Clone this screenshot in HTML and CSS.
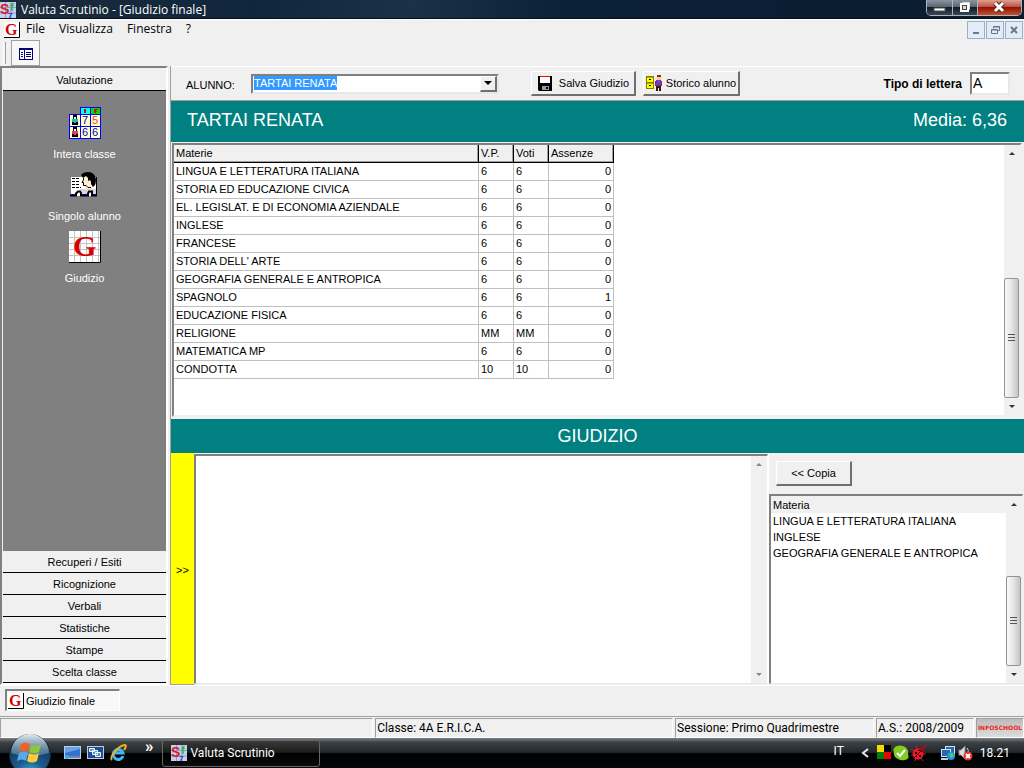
FILE: index.html
```html
<!DOCTYPE html>
<html lang="it">
<head>
<meta charset="utf-8">
<title>Valuta Scrutinio - [Giudizio finale]</title>
<link rel="stylesheet" href="styles.css">
</head>
<body>
<svg class="defs" aria-hidden="true">
  <defs>
    <symbol id="app-icon" viewBox="0 0 16 16">
      <rect width="16" height="16" fill="#c4cfea"/>
      <path d="M0 5.500H16M0 11H16M5.500 0V16M11 0V16" stroke="#8c9ac8" stroke-width="1"/>
      <text x="0" y="12" font-family="Liberation Sans" font-size="14" font-weight="bold" fill="#d8202c">S</text>
      <text x="10" y="9" font-family="Liberation Sans" font-size="11" font-weight="bold" fill="#10c030">f</text>
      <text x="8" y="16" font-family="Liberation Sans" font-size="8" font-weight="bold" fill="#2030e0">7</text>
    </symbol>
    <symbol id="g-icon" viewBox="0 0 16 16">
      <rect width="16" height="16" fill="#fff"/>
      <path d="M0 15.500H15.500V0" fill="none" stroke="#000"/>
      <text x="1" y="13" font-family="Liberation Serif" font-size="16" font-weight="bold" fill="#d80000">G</text>
    </symbol>
    <symbol id="flag" viewBox="0 0 26 24">
      <path d="M4 3Q8 0 13 3L11 11Q7 8 2 11Z" fill="#f0602c"/>
      <path d="M14 4Q19 6 24 3L22 11Q17 14 12 11Z" fill="#8cc63c"/>
      <path d="M2 12Q7 9 11 12L9 20Q5 17 0 20Z" fill="#5aa8e8"/>
      <path d="M12 12Q17 15 22 12L20 20Q15 23 10 20Z" fill="#fccc3c"/>
    </symbol>
  </defs>
</svg>

<header class="titlebar">
  <svg class="ico16"><use href="#app-icon"/></svg>
  <h1 class="titlebar-text">Valuta Scrutinio - [Giudizio finale]</h1>
  <div class="winbtns">
    <button class="winbtn" aria-label="Riduci a icona"><svg width="25" height="15"><rect x="7" y="8" width="11" height="3" fill="#fff" stroke="#555"/></svg></button>
    <button class="winbtn" aria-label="Ripristina"><svg width="24" height="15"><path d="M9.500 4V2.500H16.500V9.500H15" fill="none" stroke="#ddd"/><rect x="8" y="4" width="7" height="7" fill="#444" stroke="#fff" stroke-width="2"/><rect x="10" y="6" width="3" height="3" fill="#ddd"/></svg></button>
    <button class="winbtn winbtn-close" aria-label="Chiudi"><svg width="43" height="15"><path d="M17 3L25 11M25 3L17 11" stroke="#5a2020" stroke-width="5"/><path d="M17 3L25 11M25 3L17 11" stroke="#fff" stroke-width="3"/></svg></button>
  </div>
</header>

<nav class="menubar">
  <svg class="ico16"><use href="#g-icon"/></svg>
  <button class="menu">File</button>
  <button class="menu">Visualizza</button>
  <button class="menu">Finestra</button>
  <button class="menu">?</button>
  <div class="mdibtns">
    <button class="mdibtn" aria-label="Riduci"><svg width="16" height="16"><path d="M5 11H11" stroke="#66788c" stroke-width="2"/></svg></button>
    <button class="mdibtn" aria-label="Ripristina"><svg width="16" height="16"><path d="M6.500 6.500V4.500H12.500V8.500H11M6 5H13M4.500 7.500H10.500V11.500H4.500ZM4 8H11" fill="none" stroke="#66788c"/></svg></button>
    <button class="mdibtn" aria-label="Chiudi"><svg width="16" height="16"><path d="M5 5L11 11M11 5L5 11" stroke="#66788c" stroke-width="2"/></svg></button>
  </div>
</nav>

<div class="toolbar">
  <span class="grip"></span>
  <button class="toolbtn" aria-label="Mostra barra"><svg width="14" height="12"><rect x=".5" y=".5" width="13" height="11" fill="#fff" stroke="#000080"/><path d="M0 1H14" stroke="#000080" stroke-width="2"/><path d="M5.500 2V12" stroke="#000080"/><path d="M2 4.500H4M2 6.500H4M2 8.500H4M7 4.500H12M7 6.500H12M7 8.500H12" stroke="#000080"/></svg></button>
</div>

<main class="main">
  <aside class="sidebar">
    <button class="band band-open">Valutazione</button>
    <div class="shortcuts">
      <button class="shortcut">
        <svg width="32" height="32">
          <path d="M0 7H11V0H32V32H0Z" fill="#0000ff"/>
          <rect x="12" y="1" width="9" height="6" fill="#00ffff"/><rect x="22" y="1" width="9" height="6" fill="#00e000"/>
          <path d="M16 2V6M26 2V6" stroke="#e00000" stroke-width="2"/><path d="M26 2.500H29M26 4.500H28" stroke="#e00000"/>
          <path d="M1 8H11V19H1ZM12 8H21V19H12ZM22 8H31V19H22ZM1 20H11V31H1ZM12 20H21V31H12ZM22 20H31V31H22Z" fill="#ffffc8"/>
          <path d="M4 8H8V12H4ZM3 15H9V18H3ZM4 20H8V24H4ZM3 27H9V30H3Z" fill="#000"/>
          <path d="M5 10H7V12H5ZM5 22H7V24H5Z" fill="#fff"/>
          <path d="M3 12H9V15H7V16H5V15H3Z" fill="#20b8c0"/><path d="M3 24H9V27H7V28H5V27H3Z" fill="#e83870"/>
          <g font-family="Liberation Sans" font-size="11" fill="#0000c8"><text x="13" y="17">7</text><text x="23" y="17" fill="#f04050">5</text><text x="13" y="29">6</text><text x="23" y="29">6</text></g>
        </svg>
        <span>Intera classe</span>
      </button>
      <button class="shortcut">
        <svg width="32" height="32">
          <path d="M3 8H28V27H3Z" fill="#fff"/><path d="M28.500 8V27" stroke="#000"/>
          <path d="M4 9.500H11M4 12.500H12M4 15.500H11M4 18.500H13" stroke="#000" stroke-dasharray="3 1"/>
          <path d="M15 5Q19 3 24 5L27 9L26 14L24 18V20H17V17L14 16V13L15 11Z" fill="#fff1cf"/>
          <path d="M13 6Q15 3 20 3Q25 3 27 7Q29 11 27 16L25 18L23 15V13L22 11L20 12V9L18 7L15 9Z" fill="#000"/>
          <path d="M15.500 9V11L14 13.500H15.500V16.500H18L20 18.500H23" stroke="#000" fill="none"/>
          <path d="M12 20H28V26H24V23H21V26H14V23H12Z" fill="#d8d8d8"/>
          <path d="M2 26.500H8V24.500L10 22.500H12L13 24V26.500H20V24.500L21 22.500H24V26.500H29" fill="none" stroke="#000" stroke-width="2"/>
          <path d="M3 25.500H7M14 25.500H19M25 25.500H28" stroke="#0000c0"/>
        </svg>
        <span>Singolo alunno</span>
      </button>
      <button class="shortcut">
        <svg width="32" height="32">
          <rect width="32" height="32" fill="#fff"/>
          <path d="M5.500 0V31M11.500 0V31M17.500 0V31M23.500 0V31M29.500 0V31M0 6.500H31M0 12.500H31M0 18.500H31M0 24.500H31" stroke="#c4c4c4"/>
          <path d="M0 31.500H31.500V0" fill="none" stroke="#000"/>
          <text x="4" y="25" font-family="Liberation Serif" font-size="30" font-weight="bold" fill="#d80000">G</text>
        </svg>
        <span>Giudizio</span>
      </button>
    </div>
    <button class="band">Recuperi / Esiti</button>
    <button class="band">Ricognizione</button>
    <button class="band">Verbali</button>
    <button class="band">Statistiche</button>
    <button class="band">Stampe</button>
    <button class="band">Scelta classe</button>
  </aside>

  <section class="content">
    <form class="formbar">
      <label class="alunno" for="alunno">ALUNNO:</label>
      <div class="combo">
        <input id="alunno" class="combo-input" size="12" value="TARTAI RENATA">
        <button class="combo-arrow" type="button" aria-label="Apri elenco"><svg width="8" height="4"><path d="M0 0H8L4 4Z"/></svg></button>
      </div>
      <button class="btn btn-save" type="button">
        <svg width="16" height="16"><path d="M1 1H15V16H2L1 15Z" fill="#000"/><path d="M3 1H13V8H3Z" fill="#fff"/><path d="M3 1.500H13" stroke="#f00"/><path d="M5 11H12V15H5Z" fill="#999"/><path d="M9 12H11V14H9Z" fill="#000"/></svg>
        Salva Giudizio</button>
      <button class="btn btn-history" type="button">
        <svg width="17" height="16"><path d="M0 1H8V14H0Z" fill="#808000"/><path d="M1 2H7V7H1ZM1 8H7V13H1Z" fill="#ff0"/><path d="M3 4.500H5M3 10.500H5" stroke="#000"/><path d="M1 2.500H7M1 8.500H7" stroke="#b0b000"/><rect x="11" y="0" width="4" height="5" fill="#a02810"/><rect x="11" y="2" width="4" height="3" fill="#ffc890"/><path d="M9 6H16V11H9Z" fill="#b02030"/><path d="M10 5H15V10H10Z" fill="#4048e8"/><path d="M12 5H13V9H12Z" fill="#f03030"/><path d="M10 11H15V16H13V13H12V16H10Z" fill="#301818"/></svg>
        Storico alunno</button>
      <label class="tipo" for="tipo">Tipo di lettera</label>
      <input id="tipo" class="tipo-input" value="A">
    </form>

    <div class="banner banner-top">
      <h2 class="banner-text">TARTAI RENATA</h2>
      <span class="banner-text">Media: 6,36</span>
    </div>

    <div class="gridbox">
      <div class="gridarea">
        <table class="grid">
          <colgroup><col class="c-mat"><col class="c-vp"><col class="c-vp"><col class="c-ass"></colgroup>
          <thead><tr><th>Materie</th><th>V.P.</th><th>Voti</th><th>Assenze</th></tr></thead>
          <tbody>
            <tr><td>LINGUA E LETTERATURA ITALIANA</td><td>6</td><td>6</td><td>0</td></tr>
            <tr><td>STORIA ED EDUCAZIONE CIVICA</td><td>6</td><td>6</td><td>0</td></tr>
            <tr><td>EL. LEGISLAT. E DI ECONOMIA AZIENDALE</td><td>6</td><td>6</td><td>0</td></tr>
            <tr><td>INGLESE</td><td>6</td><td>6</td><td>0</td></tr>
            <tr><td>FRANCESE</td><td>6</td><td>6</td><td>0</td></tr>
            <tr><td>STORIA DELL' ARTE</td><td>6</td><td>6</td><td>0</td></tr>
            <tr><td>GEOGRAFIA GENERALE E ANTROPICA</td><td>6</td><td>6</td><td>0</td></tr>
            <tr><td>SPAGNOLO</td><td>6</td><td>6</td><td>1</td></tr>
            <tr><td>EDUCAZIONE FISICA</td><td>6</td><td>6</td><td>0</td></tr>
            <tr><td>RELIGIONE</td><td>MM</td><td>MM</td><td>0</td></tr>
            <tr><td>MATEMATICA MP</td><td>6</td><td>6</td><td>0</td></tr>
            <tr><td>CONDOTTA</td><td>10</td><td>10</td><td>0</td></tr>
          </tbody>
        </table>
      </div>
      <div class="scroll">
        <button class="sarrow" aria-label="Su"><svg width="6" height="3"><path d="M3 0L6 3H0Z"/></svg></button>
        <div class="track"><div class="thumb thumb-grid"><svg width="7" height="8"><path d="M0 .5H7M0 3.500H7M0 6.500H7" stroke="#555"/></svg></div></div>
        <button class="sarrow" aria-label="Giù"><svg width="6" height="3"><path d="M0 0H6L3 3Z"/></svg></button>
      </div>
    </div>

    <div class="banner banner-mid"><h2 class="banner-text">GIUDIZIO</h2></div>

    <div class="bottom">
      <button class="yellow">&gt;&gt;</button>
      <div class="editor">
        <textarea class="editor-text" aria-label="Giudizio"></textarea>
        <div class="scroll scroll-off">
          <button class="sarrow" aria-label="Su" disabled><svg width="6" height="3"><path d="M3 0L6 3H0Z"/></svg></button>
          <div class="track"></div>
          <button class="sarrow" aria-label="Giù" disabled><svg width="6" height="3"><path d="M0 0H6L3 3Z"/></svg></button>
        </div>
      </div>
      <div class="side">
        <div class="sidebtn"><button class="btn btn-copy">&lt;&lt; Copia</button></div>
        <div class="listbox">
          <table class="list">
            <thead><tr><th>Materia</th></tr></thead>
            <tbody><tr><td>LINGUA E LETTERATURA ITALIANA</td></tr><tr><td>INGLESE</td></tr><tr><td>GEOGRAFIA GENERALE E ANTROPICA</td></tr></tbody>
          </table>
          <div class="scroll">
            <button class="sarrow" aria-label="Su"><svg width="6" height="3"><path d="M3 0L6 3H0Z"/></svg></button>
            <div class="track"><div class="thumb thumb-list"><svg width="7" height="8"><path d="M0 .5H7M0 3.500H7M0 6.500H7" stroke="#555"/></svg></div></div>
            <button class="sarrow" aria-label="Giù"><svg width="6" height="3"><path d="M0 0H6L3 3Z"/></svg></button>
          </div>
        </div>
      </div>
    </div>
  </section>
</main>

<div class="tabs">
  <button class="tab"><svg class="ico16"><use href="#g-icon"/></svg>Giudizio finale</button>
</div>

<footer class="status">
  <span class="cell cell-a"></span>
  <span class="cell cell-b">Classe: 4A E.R.I.C.A.</span>
  <span class="cell cell-c">Sessione: Primo Quadrimestre</span>
  <span class="cell cell-d">A.S.: 2008/2009</span>
  <span class="cell cell-logo">INFOSCHOOL</span>
</footer>

<div class="taskbar">
  <button class="start" aria-label="Start">
    <svg width="44" height="34" viewBox="0 0 44 34">
      <defs>
        <radialGradient id="orb" cx=".5" cy="1" r=".9"><stop offset="0" stop-color="#30c8f0"/><stop offset=".4" stop-color="#1b5c90"/><stop offset="1" stop-color="#12304c"/></radialGradient>
        <linearGradient id="gloss" x2="0" y2="1"><stop offset="0" stop-color="#e4eef4"/><stop offset="1" stop-color="#6a94b0" stop-opacity=".5"/></linearGradient>
      </defs>
      <circle cx="22" cy="21" r="20.500" fill="url(#orb)" stroke="#1b252e"/>
      <path d="M3 19A19 19 0 0 1 41 19Q22 25 3 19Z" fill="url(#gloss)"/>
      <use href="#flag" x="9" y="7" width="26" height="24"/>
    </svg>
  </button>
  <div class="quick">
    <button class="q" aria-label="Mostra desktop"><svg width="17" height="14"><rect x=".5" y=".5" width="16" height="12" fill="#3272d0" stroke="#b8cce4"/><path d="M1 7L16 3V1H1Z" fill="#6ba2e8"/><rect x="1" y="10" width="15" height="2" fill="#7088a8"/><circle cx="3" cy="11" r="2" fill="#30b0f0"/></svg></button>
    <button class="q" aria-label="Cambia finestra"><svg width="17" height="14"><rect x=".5" y=".5" width="16" height="12" fill="#1c4c94" stroke="#b8cce4"/><path d="M2.500 2.500H7.500V5.500H2.500ZM5.500 4.500H10.500V8.500H5.500ZM8.500 6.500H13.500V10.500H8.500Z" fill="#5c8cc8" stroke="#f0f8ff"/></svg></button>
    <button class="q" aria-label="Internet Explorer"><svg width="17" height="18"><path d="M13 12A5 5 0 1 1 13 9H4" fill="none" stroke="#40b4f4" stroke-width="3"/><path d="M2 16C-1 13 9 1 15 1Q17 2 14 6" fill="none" stroke="#f0b020" stroke-width="2"/></svg></button>
    <button class="more" aria-label="Altro">»</button>
  </div>
  <button class="task"><svg class="ico16"><use href="#app-icon"/></svg>Valuta Scrutinio</button>
  <div class="tray">
    <span class="lang">IT</span>
    <button class="q" aria-label="Mostra icone"><svg width="8" height="10"><path d="M7 1L2 5L7 9" fill="none" stroke="#e8e8f0" stroke-width="2"/></svg></button>
    <div class="trayicons">
      <svg width="14" height="14"><rect width="7" height="7" fill="#f8d800"/><rect x="7" width="7" height="7"/><rect y="7" width="7" height="7" fill="#008000"/><rect x="7" y="7" width="7" height="7" fill="#f00000"/></svg>
      <svg width="16" height="16"><path d="M4 1Q7 0 10 1Q16 3 15 9Q17 14 12 15Q8 16 5 14Q0 12 1 7Q-1 3 4 1Z" fill="#80cc20"/><path d="M4 8L7 11L12 5" fill="none" stroke="#fff" stroke-width="2"/></svg>
      <svg width="16" height="16"><path d="M3 6L0 4M2 10H0M5 13L4 16M10 13L12 16M12 9H15M6 4L5 1M12 3L15 0" stroke="#c02030"/><circle cx="7" cy="9" r="5.500" fill="#f01828"/><circle cx="11" cy="4" r="3" fill="#901018"/><path d="M3 13L11 5" stroke="#400"/><path d="M4 7H6V9H4ZM8 10H10V12H8ZM7 5H9V6H7ZM5 11H6V12H5Z" fill="#200"/></svg>
    </div>
    <div class="trayicons">
      <svg width="16" height="16"><rect x="5.500" y="1.500" width="9" height="8" fill="#2468b0" stroke="#d0e4f8"/><rect x="1.500" y="4.500" width="9" height="7" fill="#2468b0" stroke="#d0e4f8"/><path d="M1 14H8" stroke="#c0d0e0" stroke-width="2"/><circle cx="11" cy="11" r="4" fill="#2090f0"/><path d="M9 9L12 8L14 11L11 13Z" fill="#58d050"/></svg>
      <svg width="16" height="16"><path d="M1 5H3L7 1V14L3 10H1Z" fill="#d8dce0" stroke="#888"/><path d="M9 3Q11 5 10 8" stroke="#ddd" fill="none"/><circle cx="10" cy="11" r="4.500" fill="#e03030"/><path d="M8 9L12 13M12 9L8 13" stroke="#fff" stroke-width="2"/></svg>
    </div>
    <time class="clock">18.21</time>
  </div>
</div>
<script src="page.js"></script>
</body>
</html>
```

FILE: page.js
```js
document.getElementById('alunno').select();
```

FILE: styles.css
```css
* { box-sizing: border-box; }
body {
  margin: 0;
  min-height: 100vh;
  display: flex;
  flex-direction: column;
  background: #f0f0f0;
  color: #000;
  font: 11px/14px "Liberation Sans", Arial, sans-serif;
}
button { font: inherit; color: inherit; background: none; border: 0; padding: 0; margin: 0; }
button svg { display: block; flex: none; }
input, textarea { font: inherit; color: inherit; border-radius: 0; outline: none; }
h1, h2 { margin: 0; font-weight: normal; }
.defs { position: absolute; width: 0; height: 0; }
.ico16 { width: 16px; height: 16px; flex: none; display: block; }

.titlebar {
  height: 19px;
  display: flex;
  align-items: flex-start;
  gap: 5px;
  padding: 0 2px 0 0;
  background: linear-gradient(100deg, #1c2c3c, #10263c 25%, #1b3148 40%, #0b2136 55%, #0a1c30);
  border-bottom: 1px solid #0a0f14;
}
.titlebar .ico16 { margin-top: 2px; }
.titlebar-text { flex: 1; color: #fff; font: 12px/20px "Open Sans", "Noto Sans", sans-serif; }
.winbtns {
  display: flex;
  height: 16px;
  border: 1px solid #a8b4c0;
  border-top: 0;
  border-radius: 0 0 5px 5px;
  overflow: hidden;
}
.winbtn { background: linear-gradient(#8a949e, #5a6672 45%, #101c28 50%, #3a4652); border-right: 1px solid #a8b4c0; }
.winbtn-close { background: linear-gradient(#dca090, #c05040 45%, #8c1408 50%, #c85028); border-right: 0; }

.menubar {
  display: flex;
  align-items: center;
  height: 21px;
  gap: 14px;
  padding: 0 1px 0 4px;
  border-top: 1px solid #fff;
  font: 12px/16px "Open Sans", "Noto Sans", sans-serif;
}
.menubar .ico16 { margin-right: -8px; }
.menu { padding-bottom: 2px; }
.mdibtns { display: flex; gap: 1px; margin-left: auto; }
.mdibtn { width: 18px; height: 18px; border: 1px solid #9cb0c8; background: #e2ecf8; }

.toolbar { display: flex; height: 26px; gap: 5px; padding-left: 3px; }
.grip { width: 3px; margin: 2px 0; border-right: 1px solid #a0a0a0; border-left: 1px solid #fff; }
.toolbtn {
  width: 29px;
  display: grid;
  place-items: center;
  padding-top: 2px;
  background: #f7f7f7;
  border: 1px solid #a0a0a0;
}

.main { flex: 1; display: flex; min-height: 0; }
.sidebar {
  width: 168px;
  flex: none;
  display: flex;
  flex-direction: column;
  border: 2px solid #808080;
  border-right: 2px solid #fff;
  border-bottom: 2px solid #fff;
  padding-left: 1px;
}
.band { height: 22px; flex: none; border-bottom: 1px solid #000; text-align: center; }
.band-open { height: 23px; padding-top: 1px; }
.shortcuts {
  flex: 1;
  display: flex;
  flex-direction: column;
  align-items: center;
  gap: 8px;
  padding-top: 16px;
  background: #808080;
  color: #fff;
}
.shortcut { display: flex; flex-direction: column; align-items: center; gap: 8px; }

.content {
  flex: 1;
  min-width: 0;
  display: flex;
  flex-direction: column;
  margin-left: 2px;
  border-left: 1px solid #a0a0a0;
}
.formbar {
  height: 35px;
  flex: none;
  display: flex;
  align-items: center;
  padding: 0 14px 0 15px;
  border-top: 1px solid #fff;
  border-bottom: 1px solid #a0a0a0;
}
.alunno { width: 65px; padding-top: 3px; }
.combo {
  width: 248px;
  height: 20px;
  display: flex;
  background: #fff;
  border: 2px solid #808080;
  border-color: #808080 #e8e8e8 #e8e8e8 #808080;
}
.combo-input { flex: 1; min-width: 0; border: 0; padding: 0 0 2px 1px; background: none; }
.combo-input::selection { background: #3399ff; color: #fff; }
.combo-arrow, .btn {
  background: #f0f0f0;
  border: 1px solid #fff;
  border-right: 2px solid #707070;
  border-bottom: 2px solid #707070;
}
.combo-arrow { width: 17px; display: grid; place-items: center; }
.btn { display: flex; align-items: center; justify-content: center; height: 25px; }
.btn-save { width: 105px; gap: 6px; margin-left: 32px; }
.btn-history { width: 97px; gap: 3px; margin-left: 7px; }
.tipo { margin-left: auto; font-weight: bold; font-size: 12px; }
.tipo-input {
  width: 40px;
  height: 23px;
  margin-left: 8px;
  padding: 0 1px 2px;
  font-size: 14px;
  background: #fff;
  border: 2px solid #808080;
  border-color: #808080 #e8e8e8 #e8e8e8 #808080;
}

.banner { flex: none; display: flex; align-items: center; background: #008080; color: #fff; }
.banner-text { font-size: 18px; line-height: 20px; }
.banner-top { height: 41px; justify-content: space-between; padding: 0 17px 4px 16px; }
.banner-mid { height: 34px; justify-content: center; }

.gridbox {
  flex: 1;
  display: flex;
  margin: 1px 2px 2px 1px;
  border: 2px solid #808080;
  border-color: #808080 #f0f0f0 #f0f0f0 #808080;
  background: #fff;
}
.gridarea { flex: 1; min-width: 0; }
.grid { border-collapse: separate; border-spacing: 0; table-layout: fixed; width: 440px; }
.c-mat { width: 305px; }
.c-vp { width: 35px; }
.c-ass { width: 65px; }
.grid th, .grid td { height: 18px; padding: 0 2px 2px; text-align: left; font-weight: normal; white-space: nowrap; line-height: 14px; }
.grid th { background: #f0f0f0; border-right: 1px solid #000; border-bottom: 1px solid #000; box-shadow: inset -1px -1px #a0a0a0; }
.grid td { border-right: 1px solid #c0c0c0; border-bottom: 1px solid #c0c0c0; }
.grid td:last-child { text-align: right; }

.scroll { width: 16px; flex: none; display: flex; flex-direction: column; background: #f0f0f0; fill: #333; }
.sarrow { height: 17px; display: grid; place-items: center; }
.scroll-off { fill: #888; }
.track { flex: 1; display: flex; flex-direction: column; justify-content: flex-end; }
.thumb {
  margin: 0 1px 0 0;
  display: grid;
  place-items: center;
  border: 1px solid #949494;
  border-radius: 2px;
  background: linear-gradient(90deg, #f8f8f8, #e8e8ea 45%, #c4c4c8);
}
.thumb-grid { height: 51%; }
.thumb-list { height: 59%; }

.bottom { height: 232px; flex: none; display: flex; }
.yellow { width: 23px; padding-top: 2px; background: #ff0; border-bottom: 1px solid #a0a0a0; }
.editor {
  flex: 1;
  display: flex;
  margin: 1px 0;
  background: #fff;
  border: 2px solid #808080;
  border-right: 1px solid #fff;
  border-bottom: 1px solid #e8e8e8;
}
.editor-text { flex: 1; border: 0; resize: none; padding: 2px; background: #fff; }
.side { width: 256px; flex: none; display: flex; flex-direction: column; border-left: 1px solid #fff; }
.sidebtn { height: 41px; padding: 8px 0 0 7px; }
.btn-copy { width: 76px; }
.listbox {
  flex: 1;
  display: flex;
  align-items: stretch;
  margin: 0 1px 1px 0;
  background: #fff;
  border: 2px solid #808080;
  border-right: 1px solid #f0f0f0;
  border-bottom: 1px solid #e8e8e8;
}
.list { flex: 1; align-self: flex-start; border-spacing: 0; }
.list th, .list td { height: 16px; padding: 0 2px; text-align: left; font-weight: normal; line-height: 14px; }
.list th { height: 17px; background: #f0f0f0; }

.tabs { height: 32px; padding: 3px 5px; border-top: 1px solid #fff; border-bottom: 1px solid #a0a0a0; }
.tab {
  width: 115px;
  height: 22px;
  display: flex;
  align-items: center;
  gap: 2px;
  padding-left: 1px;
  background: #f8f8f8;
  border: 2px solid #808080;
  border-right: 1px solid #fff;
  border-bottom: 1px solid #fff;
}
.status { display: flex; gap: 2px; height: 20px; margin-top: 1px; font: 12px/19px Roboto, "Open Sans", sans-serif; }
.cell { border: 1px solid #a0a0a0; border-right-color: #fff; border-bottom-color: #fff; padding-left: 1px; white-space: nowrap; }
.cell-a { flex: 374; }
.cell-b { flex: 298; }
.cell-c { flex: 198; }
.cell-d { width: 98px; }
.cell-logo { width: 48px; padding: 0; text-align: center; background: linear-gradient(#bcbcbc, #dcdcdc); color: #f02020; font: bold 6px/17px "DejaVu Sans", sans-serif; }

.taskbar {
  height: 30px;
  display: flex;
  align-items: center;
  padding-left: 8px;
  background: linear-gradient(#7c8084, #3c4146 15%, #22272b 48%, #000 52%, #05080a);
  color: #fff;
  font: 12px/16px Roboto, "Open Sans", sans-serif;
}
.start { margin-top: -4px; z-index: 1; }
.quick { display: flex; align-items: center; gap: 6px; margin-left: 12px; }
.more { margin: -14px 0 0 12px; font-size: 17px; font-weight: bold; }
.task {
  width: 158px;
  height: 27px;
  display: flex;
  align-items: center;
  gap: 4px;
  margin-left: 8px;
  padding-left: 8px;
  border: 1px solid #666;
  border-radius: 3px;
  background: linear-gradient(#3a3a3a, #1c1c1c 45%, #000 50%, #0c0c0c);
}
.tray { display: flex; align-items: center; margin-left: auto; padding-right: 14px; }
.lang { margin: -4px 17px 0 0; }
.trayicons { display: flex; gap: 2px; margin-left: 8px; }
.trayicons + .trayicons { margin-left: 13px; }
.clock { margin-left: 6px; }
```
